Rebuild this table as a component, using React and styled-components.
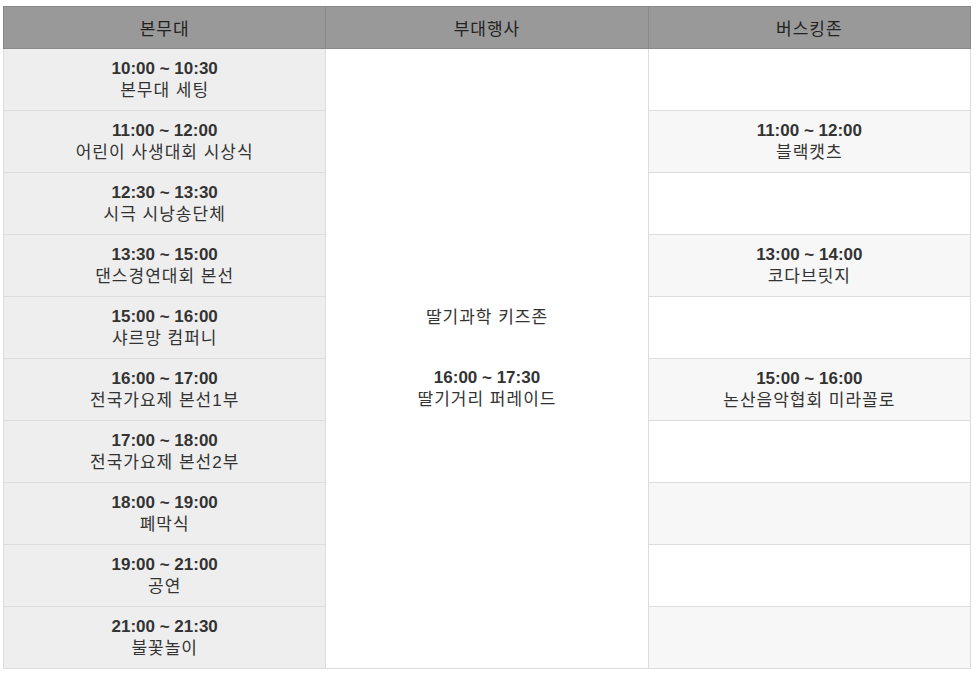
import React from 'react';
import styled, { createGlobalStyle } from 'styled-components';

const GlobalStyle = createGlobalStyle`
  body {
    margin: 0;
    background: #fff;
    font-family: "Liberation Sans", "Noto Sans CJK KR", sans-serif;
  }
`;

const Wrap = styled.div`
  padding: 6px 7px 0 3px;
`;

const Table = styled.table`
  width: 100%;
  border-collapse: collapse;
  table-layout: fixed;
  font-size: 17px;
  color: #333;
`;

const HeadCell = styled.th`
  height: 41px;
  padding: 0;
  background: #999;
  border: 1px solid #888;
  color: #222;
  font-weight: normal;
  letter-spacing: 1px;
  text-align: center;
  vertical-align: middle;
`;

const Row = styled.tr`
  height: 62px;
`;

const Cell = styled.td`
  padding: 0;
  border: 1px solid #ddd;
  text-align: center;
  vertical-align: middle;
  line-height: 22px;
  background: ${p => p.$tone === 'dark' ? '#eee' : p.$tone === 'light' ? '#f7f7f7' : '#fff'};
`;

const Time = styled.strong`
  display: block;
  font-weight: bold;
`;

const Name = styled.span`
  display: block;
  letter-spacing: 1px;
`;

const Gap = styled.div`
  height: 38px;
`;

const mainStage = [
  ['10:00 ~ 10:30', '본무대 세팅'],
  ['11:00 ~ 12:00', '어린이 사생대회 시상식'],
  ['12:30 ~ 13:30', '시극 시낭송단체'],
  ['13:30 ~ 15:00', '댄스경연대회 본선'],
  ['15:00 ~ 16:00', '샤르망 컴퍼니'],
  ['16:00 ~ 17:00', '전국가요제 본선1부'],
  ['17:00 ~ 18:00', '전국가요제 본선2부'],
  ['18:00 ~ 19:00', '폐막식'],
  ['19:00 ~ 21:00', '공연'],
  ['21:00 ~ 21:30', '불꽃놀이'],
];

const busking = [
  null,
  ['11:00 ~ 12:00', '블랙캣츠'],
  null,
  ['13:00 ~ 14:00', '코다브릿지'],
  null,
  ['15:00 ~ 16:00', '논산음악협회 미라꼴로'],
  null,
  null,
  null,
  null,
];

const Slot = ({ item }) => item ? (
  <>
    <Time>{item[0]}</Time>
    <Name>{item[1]}</Name>
  </>
) : null;

export default function App() {
  return (
    <Wrap>
      <GlobalStyle />
      <Table>
        <thead>
          <tr>
            <HeadCell>본무대</HeadCell>
            <HeadCell>부대행사</HeadCell>
            <HeadCell>버스킹존</HeadCell>
          </tr>
        </thead>
        <tbody>
          {mainStage.map((item, i) => (
            <Row key={i}>
              <Cell $tone="dark"><Slot item={item} /></Cell>
              {i === 0 && (
                <Cell rowSpan={mainStage.length}>
                  <Name>딸기과학 키즈존</Name>
                  <Gap />
                  <Time>16:00 ~ 17:30</Time>
                  <Name>딸기거리 퍼레이드</Name>
                </Cell>
              )}
              <Cell $tone={i % 2 === 1 ? 'light' : 'white'}><Slot item={busking[i]} /></Cell>
            </Row>
          ))}
        </tbody>
      </Table>
    </Wrap>
  );
}
